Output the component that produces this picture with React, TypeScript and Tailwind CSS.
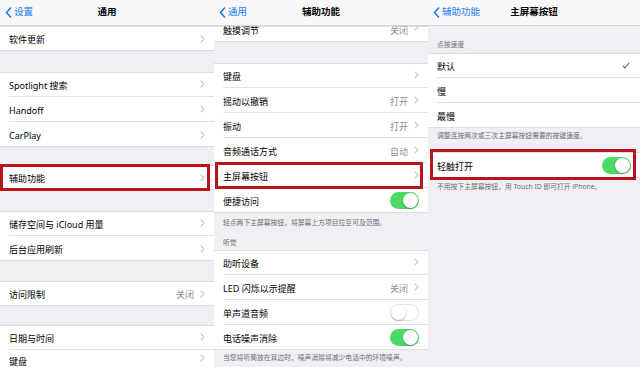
import type { ReactNode } from "react";

type RowProps = {
  label: string;
  value?: string;
  chevron?: boolean;
  toggle?: "on" | "off";
  check?: boolean;
  last?: boolean;
  h?: string;
  box?: string;
  align?: string;
};

function Chevron() {
  return (
    <svg width="5" height="8" viewBox="0 0 5 8" className="shrink-0">
      <path d="M1 1l3 3-3 3" fill="none" stroke="#c7c7cc" strokeWidth="1.1" strokeLinecap="round" strokeLinejoin="round" />
    </svg>
  );
}

function Toggle({ on }: { on: boolean }) {
  return (
    <div
      className={
        on
          ? "flex h-[17px] w-[29px] items-center justify-end rounded-full bg-[#4cd964] p-[1px]"
          : "flex h-[17px] w-[29px] items-center justify-start rounded-full border border-[#e3e3e6] bg-white"
      }
    >
      <div className="h-[15px] w-[15px] rounded-full bg-white shadow-[0_1px_2px_rgba(0,0,0,0.3)]" />
    </div>
  );
}

function Row({ label, value, chevron = true, toggle, check, last, h = "h-[25px]", box, align = "items-center" }: RowProps) {
  return (
    <div className={`relative flex ${h} pl-[9px]`}>
      <div className={`flex flex-1 ${align} pr-[9px] ${last ? "" : "border-b border-[#e2e2e5]"}`}>
        <span className="flex-1 pt-[2px] text-[9px] leading-[11px] text-black">{label}</span>
        {value && <span className="mr-[6px] pt-[2px] text-[9px] leading-[11px] text-[#8e8e93]">{value}</span>}
        {toggle ? (
          <Toggle on={toggle === "on"} />
        ) : check ? (
          <svg width="8" height="7" viewBox="0 0 8 7" className="mr-[1px]">
            <path d="M1 3.8l2 2L7 1" fill="none" stroke="#5d6b80" strokeWidth="1.1" strokeLinecap="round" strokeLinejoin="round" />
          </svg>
        ) : chevron ? (
          <Chevron />
        ) : null}
      </div>
      {box && <span className={`pointer-events-none absolute border-[3px] border-[#b8141c] ${box}`} />}
    </div>
  );
}

function Group({ children }: { children: ReactNode }) {
  return <div className="bg-white shadow-[inset_0_1px_0_#dedee2,inset_0_-1px_0_#dedee2]">{children}</div>;
}

function Header({ back, title }: { back: string; title: string }) {
  return (
    <div className="relative z-10 grid h-[26px] grid-cols-[1fr_auto_1fr] items-center border-b border-[#d6d6da] bg-[#f8f8f8]">
      <div className="flex items-center gap-[2px] pl-[5px] text-[9.5px] text-[#1a7cf5]">
        <svg width="7" height="11" viewBox="0 0 7 11">
          <path d="M5.5 1L1.5 5.5l4 4.5" fill="none" stroke="#1a7cf5" strokeWidth="1.6" strokeLinecap="round" strokeLinejoin="round" />
        </svg>
        <span>{back}</span>
      </div>
      <div className="text-[9.5px] font-semibold text-black">{title}</div>
      <div />
    </div>
  );
}

function Panel({ w, children }: { w: string; children: ReactNode }) {
  return (
    <div className={`flex h-[367px] ${w} shrink-0 flex-col overflow-hidden bg-[#efeff4] [&>*]:shrink-0`}>{children}</div>
  );
}

function Note({ children, cls = "" }: { children: ReactNode; cls?: string }) {
  return <div className={`px-[9px] text-[6.8px] leading-[9px] text-[#6d6d72] ${cls}`}>{children}</div>;
}

export default function App() {
  return (
    <div className="flex h-[367px] w-[640px] overflow-hidden bg-[#efeff4] font-['Noto_Sans','Noto_Sans_CJK_SC',sans-serif]">
      <Panel w="w-[214px]">
        <Header back="设置" title="通用" />
        <Group>
          <Row label="软件更新" last />
        </Group>
        <div className="h-[21px]" />
        <Group>
          <Row label="Spotlight 搜索" />
          <Row label="Handoff" />
          <Row label="CarPlay" last />
        </Group>
        <div className="h-[18px]" />
        <Group>
          <Row label="辅助功能" last box="-top-[1px] -bottom-[1px] left-0 right-[4px]" />
        </Group>
        <div className="h-[21px]" />
        <Group>
          <Row label="储存空间与 iCloud 用量" />
          <Row label="后台应用刷新" last />
        </Group>
        <div className="h-[20px]" />
        <Group>
          <Row label="访问限制" value="关闭" last />
        </Group>
        <div className="h-[19px]" />
        <Group>
          <Row label="日期与时间" />
          <Row label="键盘" last h="h-[24px]" align="items-start pt-[4px]" />
        </Group>
      </Panel>

      <Panel w="w-[214px]">
        <Header back="通用" title="辅助功能" />
        <Group>
          <Row label="触摸调节" value="关闭" last h="h-[16px]" align="items-start -mt-[3px]" />
        </Group>
        <div className="h-[21px]" />
        <Group>
          <Row label="键盘" />
          <Row label="摇动以撤销" value="打开" />
          <Row label="振动" value="打开" />
          <Row label="音频通话方式" value="自动" />
          <Row label="主屏幕按钮" box="-top-[1px] -bottom-[1px] left-[1px] right-[5px]" />
          <Row label="便捷访问" toggle="on" last />
        </Group>
        <div className="flex h-[37px] flex-col">
          <Note cls="pt-[5px]">轻点两下主屏幕按钮，将屏幕上方项目拉至可及范围。</Note>
          <Note cls="mt-auto pb-[3px]">听觉</Note>
        </div>
        <Group>
          <Row label="助听设备" />
          <Row label="LED 闪烁以示提醒" value="关闭" />
          <Row label="单声道音频" toggle="off" />
          <Row label="电话噪声消除" toggle="on" last />
        </Group>
        <Note cls="pt-[3px]">当您将听筒放在耳边时，噪声消除将减少电话中的环境噪声。</Note>
      </Panel>

      <Panel w="w-[212px]">
        <Header back="辅助功能" title="主屏幕按钮" />
        <div className="flex h-[27px] flex-col justify-end">
          <Note cls="pb-[4px]">点按速度</Note>
        </div>
        <Group>
          <Row label="默认" check />
          <Row label="慢" chevron={false} />
          <Row label="最慢" chevron={false} last />
        </Group>
        <div className="h-[24px]">
          <Note cls="pt-[3px]">调整连按两次或三次主屏幕按钮需要的按键速度。</Note>
        </div>
        <Group>
          <Row label="轻触打开" toggle="on" last h="h-[26px]" box="-top-[3px] -bottom-[2px] left-[2px] right-[4px]" />
        </Group>
        <Note cls="pt-[4px]">不用按下主屏幕按钮，用 Touch ID 即可打开 iPhone。</Note>
      </Panel>
    </div>
  );
}
